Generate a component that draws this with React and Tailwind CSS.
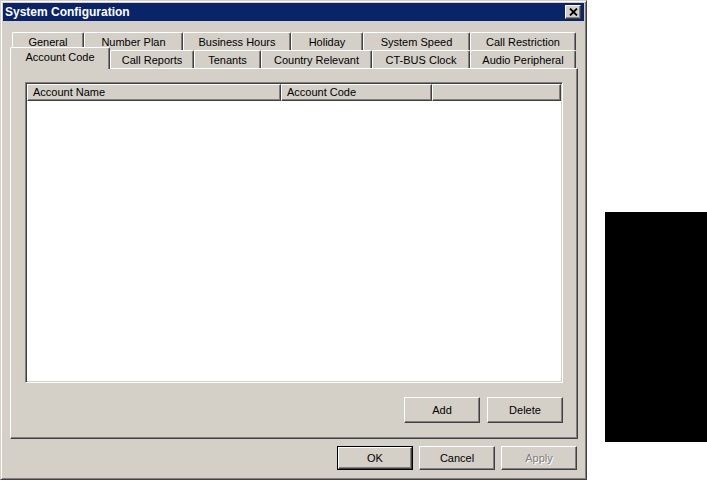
import React from "react";

const rowOne = [
  { label: "General", w: "w-[72px]" },
  { label: "Number Plan", w: "w-[99px]" },
  { label: "Business Hours", w: "w-[108px]" },
  { label: "Holiday", w: "w-[72px]" },
  { label: "System Speed", w: "w-[107px]" },
  { label: "Call Restriction", w: "w-[106px]" },
];

const rowTwo = [
  { label: "Account Code", w: "w-[100px]", active: true },
  { label: "Call Reports", w: "w-[84px]" },
  { label: "Tenants", w: "w-[67px]" },
  { label: "Country Relevant", w: "w-[111px]" },
  { label: "CT-BUS Clock", w: "w-[98px]" },
  { label: "Audio Peripheral", w: "w-[106px]" },
];

const raised =
  "border border-t-white border-l-white border-r-[#404040] border-b-[#404040] shadow-[inset_-1px_-1px_0_#808080]";

const Tab = ({ label, w, active }) => (
  <div
    className={`${w} shrink-0 flex items-center justify-center bg-[#d4d0c8] border-t border-l border-r border-t-white border-l-white border-r-[#404040] rounded-t-[2px] shadow-[inset_-1px_0_0_#808080] ${
      active ? "relative z-10 h-[22px] -mt-[3px] pb-[2px]" : "h-[18px] pt-[1px]"
    }`}
  >
    {label}
  </div>
);

const Button = ({ children, disabled, isDefault, className = "", textClass = "" }) => {
  const inner = (
    <div
      className={`w-full h-full flex items-center justify-center bg-[#d4d0c8] ${raised} ${textClass} ${
        disabled ? "text-[#808080] [text-shadow:1px_1px_0_#ffffff]" : "text-black"
      }`}
    >
      {children}
    </div>
  );
  if (isDefault) {
    return <div className={`border border-black ${className}`}>{inner}</div>;
  }
  return <div className={className}>{inner}</div>;
};

const App = () => {
  return (
    <div className="w-[707px] h-[480px] bg-white flex font-['Liberation_Sans',Arial,sans-serif] text-[11px] text-black leading-none">
      {/* dialog window */}
      <div className="w-[587px] h-[480px] shrink-0 flex flex-col bg-[#d4d0c8] border border-t-[#d4d0c8] border-l-[#d4d0c8] border-r-[#404040] border-b-[#404040] shadow-[inset_1px_1px_0_#ffffff,inset_-1px_-1px_0_#808080] p-[2px]">
        {/* title bar */}
        <div className="h-[18px] bg-[#0a246a] flex items-center justify-between pl-[2px] pr-[3px]">
          <span className="text-white font-bold text-[12px]">System Configuration</span>
          <div className={`w-[16px] h-[14px] bg-[#d4d0c8] flex items-center justify-center ${raised}`}>
            <svg width="9" height="8" viewBox="0 0 9 8">
              <path d="M1 0.5 L8 7.5 M8 0.5 L1 7.5" stroke="#000" strokeWidth="1.8" fill="none" />
            </svg>
          </div>
        </div>

        {/* tabs */}
        <div className="mt-[11px] flex flex-col">
          <div className="flex ml-[9px] h-[18px]">
            {rowOne.map((t) => (
              <Tab key={t.label} {...t} />
            ))}
          </div>
          <div className="flex items-start ml-[7px] h-[18px]">
            {rowTwo.map((t) => (
              <Tab key={t.label} {...t} />
            ))}
          </div>
        </div>

        {/* tab panel */}
        <div className="ml-[7px] w-[568px] h-[371px] flex flex-col border border-t-white border-l-white border-r-[#404040] border-b-[#404040] shadow-[inset_-1px_-1px_0_#808080] pt-[13px] pl-[14px]">
          {/* list view */}
          <div className="w-[538px] h-[301px] bg-white flex flex-col border border-t-[#808080] border-l-[#808080] border-r-white border-b-white shadow-[inset_1px_1px_0_#404040,inset_-1px_-1px_0_#d4d0c8] p-[1px]">
            <div className="flex h-[17px] shrink-0">
              <div className={`w-[254px] bg-[#d4d0c8] flex items-center pl-[5px] ${raised}`}>Account Name</div>
              <div className={`w-[151px] bg-[#d4d0c8] flex items-center pl-[5px] ${raised}`}>Account Code</div>
              <div className={`flex-1 bg-[#d4d0c8] ${raised}`} />
            </div>
            <div className="flex-1" />
          </div>

          <div className="flex justify-end gap-[7px] w-[538px] mt-[14px]">
            <Button className="w-[76px] h-[26px]" textClass="pt-[1px]">Add</Button>
            <Button className="w-[76px] h-[26px]" textClass="pt-[1px]">Delete</Button>
          </div>
        </div>

        {/* dialog buttons */}
        <div className="flex justify-end gap-[6px] mt-[7px] mr-[7px]">
          <Button isDefault className="w-[76px] h-[24px]">OK</Button>
          <Button className="w-[76px] h-[24px]">Cancel</Button>
          <Button disabled className="w-[76px] h-[24px]">Apply</Button>
        </div>
      </div>

      {/* black block */}
      <div className="ml-[18px] mt-[212px] w-[102px] h-[230px] bg-black" />
    </div>
  );
};

export default App;
